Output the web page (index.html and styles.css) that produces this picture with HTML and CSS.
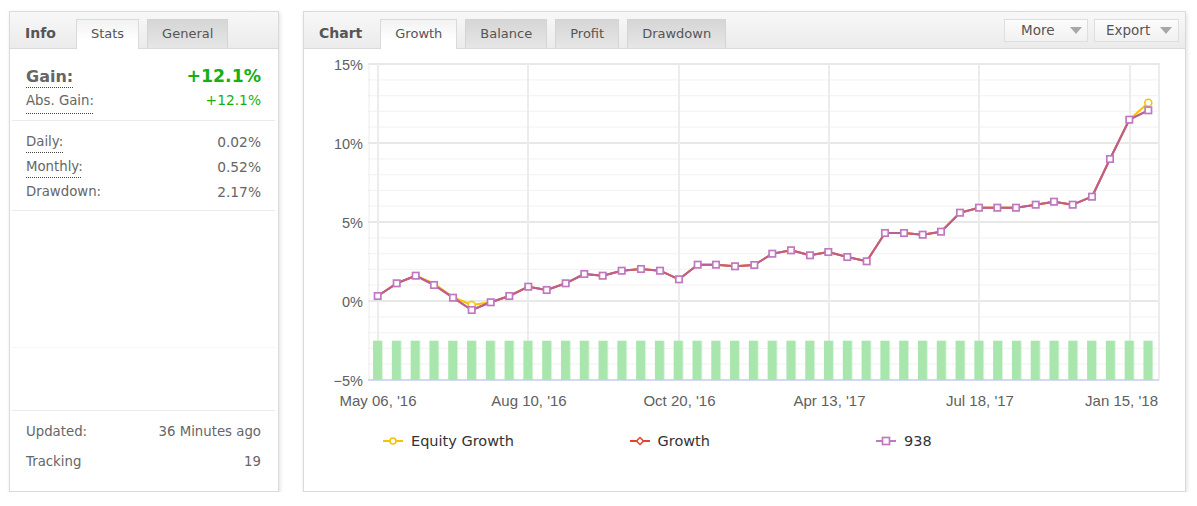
FILE: index.html
```html
<!DOCTYPE html>
<html>
<head>
<meta charset="utf-8">
<title>Stats</title>
<link rel="stylesheet" href="styles.css">
</head>
<body>
<div class="page">
  <section class="panel info">
    <div class="ph">
      <span class="ptitle">Info</span>
      <span class="tab active">Stats</span>
      <span class="tab">General</span>
    </div>
    <div class="sec sec-gain">
      <div class="row big"><span class="lbl dotted">Gain:</span><span class="val green">+12.1%</span></div>
      <div class="row"><span class="lbl dotted abs">Abs. Gain:</span><span class="val green">+12.1%</span></div>
    </div>
    <div class="sec sec-rates">
      <div class="row"><span class="lbl dotted">Daily:</span><span class="val">0.02%</span></div>
      <div class="row"><span class="lbl dotted">Monthly:</span><span class="val">0.52%</span></div>
      <div class="row"><span class="lbl">Drawdown:</span><span class="val">2.17%</span></div>
    </div>
    <div class="spacer"><div class="faint"></div></div>
    <div class="sec sec-foot">
      <div class="row"><span class="lbl">Updated:</span><span class="val">36 Minutes ago</span></div>
      <div class="row"><span class="lbl">Tracking</span><span class="val">19</span></div>
    </div>
  </section>

  <section class="panel chart">
    <div class="ph">
      <span class="ptitle narrow">Chart</span>
      <span class="tab active">Growth</span>
      <span class="tab">Balance</span>
      <span class="tab">Profit</span>
      <span class="tab">Drawdown</span>
      <div class="tools">
        <span class="btn more">More<i class="arr"></i></span>
        <span class="btn export">Export<i class="arr"></i></span>
      </div>
    </div>
    <svg class="plot" width="881" height="371" viewBox="304 49 881 371" xmlns="http://www.w3.org/2000/svg">
      <defs>
        <pattern id="bars" patternUnits="userSpaceOnUse" x="373.05" y="0" width="18.79" height="500">
          <rect x="0" y="0" width="9.3" height="500" fill="#a8e6ad"/>
        </pattern>
        <marker id="sq" markerUnits="userSpaceOnUse" markerWidth="10" markerHeight="10" refX="5" refY="5">
          <rect x="1.8" y="1.8" width="6.4" height="6.4" fill="#fff" stroke="#c078c0" stroke-width="1.7"/>
        </marker>
      </defs>
      <!-- minor grid -->
      <g stroke="#f4f4f4" stroke-width="1.2">
        <line x1="368" x2="1159" y1="79.8" y2="79.8"/>
        <line x1="368" x2="1159" y1="95.6" y2="95.6"/>
        <line x1="368" x2="1159" y1="111.4" y2="111.4"/>
        <line x1="368" x2="1159" y1="127.2" y2="127.2"/>
        <line x1="368" x2="1159" y1="158.8" y2="158.8"/>
        <line x1="368" x2="1159" y1="174.6" y2="174.6"/>
        <line x1="368" x2="1159" y1="190.4" y2="190.4"/>
        <line x1="368" x2="1159" y1="206.2" y2="206.2"/>
        <line x1="368" x2="1159" y1="237.8" y2="237.8"/>
        <line x1="368" x2="1159" y1="253.6" y2="253.6"/>
        <line x1="368" x2="1159" y1="269.4" y2="269.4"/>
        <line x1="368" x2="1159" y1="285.2" y2="285.2"/>
        <line x1="368" x2="1159" y1="316.8" y2="316.8"/>
        <line x1="368" x2="1159" y1="332.6" y2="332.6"/>
        <line x1="368" x2="1159" y1="348.4" y2="348.4"/>
        <line x1="368" x2="1159" y1="364.2" y2="364.2"/>
      </g>
      <!-- major grid -->
      <g stroke="#e8e8e8" stroke-width="2">
        <line x1="368" x2="1159" y1="64" y2="64"/>
        <line x1="368" x2="1159" y1="143" y2="143"/>
        <line x1="368" x2="1159" y1="222" y2="222"/>
        <line x1="368" x2="1159" y1="301" y2="301"/>
      </g>
      <g stroke="#ececec" stroke-width="2">
        <line x1="369" x2="369" y1="63" y2="380" stroke-width="1"/>
        <line x1="378" x2="378" y1="63" y2="380"/>
        <line x1="528" x2="528" y1="63" y2="380"/>
        <line x1="679" x2="679" y1="63" y2="380"/>
        <line x1="829" x2="829" y1="63" y2="380"/>
        <line x1="979" x2="979" y1="63" y2="380"/>
        <line x1="1130" x2="1130" y1="63" y2="380"/>
        <line x1="1159" x2="1159" y1="63" y2="380"/>
      </g>
      <!-- volume bars -->
      <rect x="373" y="340.7" width="781" height="39.3" fill="url(#bars)"/>
      <line x1="368" x2="1159" y1="380" y2="380" stroke="#c5cce8" stroke-width="1.5"/>

      <!-- axis labels -->
      <g class="ylab" font-family="Liberation Sans, Arial, sans-serif" font-size="14.5" fill="#606060" text-anchor="end">
        <text x="363" y="70">15%</text>
        <text x="363" y="149">10%</text>
        <text x="363" y="228">5%</text>
        <text x="363" y="307">0%</text>
        <text x="363" y="386">−5%</text>
      </g>
      <g class="xlab" font-family="Liberation Sans, Arial, sans-serif" font-size="15" fill="#606060" text-anchor="middle">
        <text x="378" y="406">May 06, '16</text>
        <text x="529" y="406">Aug 10, '16</text>
        <text x="679.5" y="406">Oct 20, '16</text>
        <text x="829.5" y="406">Apr 13, '17</text>
        <text x="980" y="406">Jul 18, '17</text>
        <text x="1158" y="406" text-anchor="end">Jan 15, '18</text>
      </g>

      <!-- series -->
      <polyline fill="none" stroke="#f5c400" stroke-width="2" stroke-linejoin="round"
        points="377.7,296 396.7,283.3 415.7,275.7 434,283.5 453,297 471.7,305 490.7,302.3 509.3,296 528.3,286.7 546.7,290 565.7,283.3 584.3,274 602.7,275.7 621.7,270.7 641,269 660,270.7 679,279.3 697.7,264.7 716,264.7 735,266.3 754.3,265 772.3,253.7 791,250.3 810,255.3 828.3,252 847.3,257 866.7,261.3 885,233 904,233 922.7,234.7 941,231.7 960,212.7 979,207.7 997.3,207.7 1016,207.7 1035.7,204.7 1054,201.7 1072.7,204.7 1092,196.7 1110,159 1129.3,119.7 1148.3,102.7"/>
      <circle cx="471.7" cy="305" r="3.5" fill="#fff" stroke="#f5c400" stroke-width="1.6"/>
      <circle cx="1148.3" cy="102.7" r="3.5" fill="#fff" stroke="#f5c400" stroke-width="1.6"/>
      <polyline fill="none" stroke="#e0452c" stroke-width="2" stroke-linejoin="round"
        points="377.7,296 396.7,283.3 415.7,275.7 434,285 453,297.7 471.7,310 490.7,302.3 509.3,296 528.3,286.7 546.7,290 565.7,283.3 584.3,274 602.7,275.7 621.7,270.7 641,269 660,270.7 679,279.3 697.7,264.7 716,264.7 735,266.3 754.3,265 772.3,253.7 791,250.3 810,255.3 828.3,252 847.3,257 866.7,261.3 885,233 904,233 922.7,234.7 941,231.7 960,212.7 979,207.7 997.3,207.7 1016,207.7 1035.7,204.7 1054,201.7 1072.7,204.7 1092,196.7 1110,159 1129.3,119.7 1148.3,110.3"/>
      <polyline fill="none" stroke="#b066b8" stroke-opacity="0.75" stroke-width="2" stroke-linejoin="round"
        marker-start="url(#sq)" marker-mid="url(#sq)" marker-end="url(#sq)"
        points="377.7,296 396.7,283.3 415.7,275.7 434,285 453,297.7 471.7,310 490.7,302.3 509.3,296 528.3,286.7 546.7,290 565.7,283.3 584.3,274 602.7,275.7 621.7,270.7 641,269 660,270.7 679,279.3 697.7,264.7 716,264.7 735,266.3 754.3,265 772.3,253.7 791,250.3 810,255.3 828.3,252 847.3,257 866.7,261.3 885,233 904,233 922.7,234.7 941,231.7 960,212.7 979,207.7 997.3,207.7 1016,207.7 1035.7,204.7 1054,201.7 1072.7,204.7 1092,196.7 1110,159 1129.3,119.7 1148.3,110.3"/>
    </svg>
    <div class="legend">
      <div class="li">
        <svg class="sym" width="20" height="10" viewBox="0 0 20 10"><line x1="0" x2="20" y1="5" y2="5" stroke="#f5c400" stroke-width="2"/><circle cx="10" cy="5" r="3" fill="#fff" stroke="#f5c400" stroke-width="1.6"/></svg>
        <span>Equity Growth</span>
      </div>
      <div class="li">
        <svg class="sym" width="20" height="10" viewBox="0 0 20 10"><line x1="0" x2="20" y1="5" y2="5" stroke="#e0452c" stroke-width="2"/><rect x="7.5" y="2.5" width="5" height="5" transform="rotate(45 10 5)" fill="#fff" stroke="#e0452c" stroke-width="1.5"/></svg>
        <span>Growth</span>
      </div>
      <div class="li">
        <svg class="sym" width="20" height="10" viewBox="0 0 20 10"><line x1="0" x2="20" y1="5" y2="5" stroke="#c078c0" stroke-width="2"/><rect x="6.5" y="1.5" width="7" height="7" fill="#fff" stroke="#c078c0" stroke-width="1.7"/></svg>
        <span>938</span>
      </div>
    </div>
  </section>
</div>
</body>
</html>
```

FILE: styles.css
```css
html, body {
  margin: 0;
  background: #fff;
}
body {
  font-family: "DejaVu Sans", Verdana, sans-serif;
  font-size: 13.3px;
  color: #666;
}
.page {
  display: flex;
  align-items: flex-start;
  gap: 24px;
  padding: 11px 0 0 9px;
}
.panel {
  box-sizing: border-box;
  height: 481px;
  border: 1px solid #dadada;
  background: #fff;
  box-shadow: 1px 2px 4px rgba(0, 0, 0, 0.13);
  display: flex;
  flex-direction: column;
}
.info { width: 270px; }
.chart { width: 883px; }

/* header with tabs */
.ph {
  flex: none;
  height: 37px;
  box-sizing: border-box;
  border-bottom: 1px solid #dadada;
  background: linear-gradient(#f8f8f8, #ebebeb);
  display: flex;
  align-items: flex-end;
  gap: 8px;
  padding-left: 15px;
  font-size: 13px;
}
.ptitle {
  font-weight: bold;
  font-size: 14px;
  color: #555;
  line-height: 29px;
  margin-right: 12px;
}
.ptitle.narrow { margin-right: 10px; }
.tab {
  height: 29px;
  box-sizing: border-box;
  line-height: 27px;
  padding: 0 14px;
  border: 1px solid #d4d4d4;
  border-bottom: none;
  background: linear-gradient(#d6d6d6, #e6e6e6);
  color: #555;
}
.tab.active {
  height: 30px;
  margin-bottom: -1px;
  background: linear-gradient(#f2f2f2, #fff 70%);
  border-color: #dadada;
}
.tools {
  margin-left: auto;
  align-self: center;
  display: flex;
  gap: 6px;
  padding-right: 6px;
}
.btn {
  height: 23px;
  box-sizing: border-box;
  border: 1px solid #dedede;
  background: linear-gradient(#fcfcfc, #f1f1f1);
  display: flex;
  align-items: center;
  color: #555;
  font-size: 13.5px;
  padding-right: 5px;
}
.btn.more { width: 84px; padding-left: 16px; }
.btn.export { width: 85px; padding-left: 11px; padding-right: 6px; }
.arr {
  margin-left: auto;
  width: 0;
  height: 0;
  border-left: 6px solid transparent;
  border-right: 6px solid transparent;
  border-top: 7px solid #a8a8a8;
}

/* info panel */
.sec {
  margin: 0 3px 0 2px;
  padding: 0 14px;
  flex: none;
}
.row {
  display: flex;
  justify-content: space-between;
  align-items: center;
  height: 25px;
}
.sec-gain .val, .sec-rates .val { font-size: 13.8px; }
.sec-gain {
  padding-top: 15px;
  padding-bottom: 8px;
  border-bottom: 1px solid #ebebeb;
}
.sec-gain .row { height: 24px; }
.row.big .lbl {
  font-weight: bold;
  font-size: 16px;
  color: #666;
}
.row.big .val {
  font-weight: bold;
  font-size: 17.3px;
}
.dotted {
  text-decoration: underline dotted #444;
  text-decoration-thickness: 1px;
  text-underline-offset: 6px;
}
.dotted.abs { text-underline-offset: 8px; }
.row.big .dotted { text-underline-offset: 5px; }
.green { color: #14b014; }
.sec-rates {
  padding-top: 8px;
  padding-bottom: 6px;
  border-bottom: 1px solid #ebebeb;
}
.spacer {
  flex: 1;
  margin: 0 3px 0 2px;
}
.faint {
  margin-top: 136px;
  height: 1px;
  background: #f6f6f6;
}
.sec-foot {
  border-top: 1px solid #ebebeb;
  padding-top: 5px;
  padding-bottom: 15px;
}
.sec-foot .row { height: 30px; }

/* chart */
.plot {
  display: block;
  flex: none;
}
.legend {
  height: 42px;
  display: flex;
  align-items: center;
  padding-left: 79px;
  font-size: 14.5px;
  color: #333;
}
.li {
  width: 246.5px;
  display: flex;
  align-items: center;
  gap: 8px;
}
.sym { display: block; }
```
